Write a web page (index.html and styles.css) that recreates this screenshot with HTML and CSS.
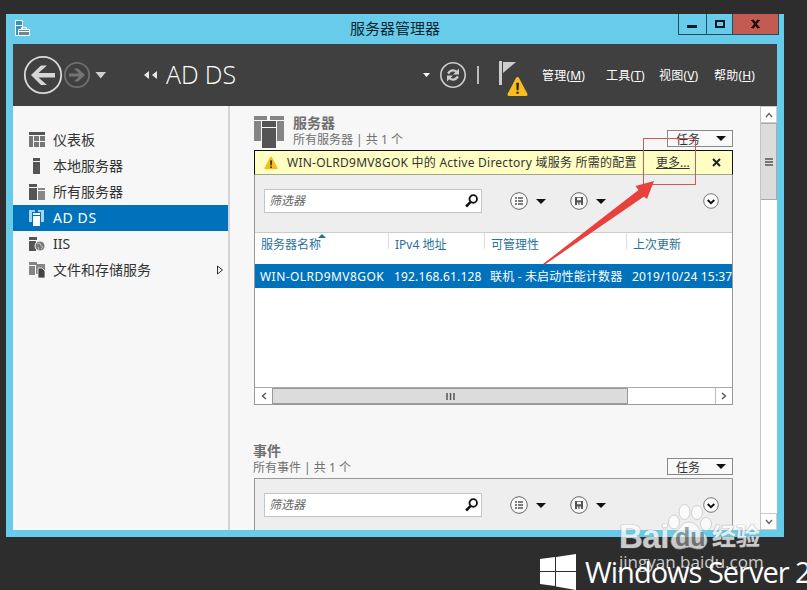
FILE: index.html
```
<!DOCTYPE html>
<html lang="zh-CN">
<head>
    <meta charset="UTF-8">
    <title>服务器管理器</title>
    <link rel="stylesheet" href="styles.css">
</head>
<body>
<!-- shared icons -->
<svg class="defs" width="0" height="0">
    <symbol id="warn" viewBox="0 0 20 20">
        <path d="M10 1 Q11 1 11.6 2.2 L19.4 17 Q20 19 18 19 H2 Q0 19 .6 17 L8.4 2.2 Q9 1 10 1Z" fill="#f5bd22"/>
        <path d="M8.8 6.5h2.6l-.4 7H9.2zM9 15h2.2v2H9z" fill="#2d230b"/>
    </symbol>
    <symbol id="search" viewBox="0 0 12 13">
        <circle cx="7.6" cy="4.6" r="3.5" fill="none" stroke="#111" stroke-width="1.7"/>
        <path d="M5 7.5L1 11.6" stroke="#111" stroke-width="2.4"/>
    </symbol>
    <symbol id="list" viewBox="0 0 18 18">
        <circle cx="9" cy="9" r="8.3" fill="#fafafa" stroke="#666" stroke-width="1"/>
        <path d="M5 6h2M5 9h2M5 12h2M8 6h5M8 9h5M8 12h5" stroke="#555" stroke-width="1.5"/>
    </symbol>
    <symbol id="save" viewBox="0 0 18 18">
        <circle cx="9" cy="9" r="8.3" fill="#fafafa" stroke="#666" stroke-width="1"/>
        <path d="M5 5h8v8H5z" fill="#555"/>
        <path d="M7 5.7h4v2.6H7zM7 10.5h1.3V13H7zM9.5 10.5H11V13H9.5z" fill="#fafafa"/>
    </symbol>
    <symbol id="expand" viewBox="0 0 16 16">
        <circle cx="8" cy="8" r="7.3" fill="#fcfcfc" stroke="#777" stroke-width="1"/>
        <path d="M4.7 7L8 10.2L11.3 7" fill="none" stroke="#111" stroke-width="2"/>
    </symbol>
</svg>

<div class="window">
    <div class="titlebar">
        <svg class="app-icon" width="17" height="17" viewBox="0 0 17 17">
            <path d="M1.500 .5h7v15h-7z" fill="#3493bd" stroke="#fff"/>
            <path d="M1 5.500h8" stroke="#fff"/>
            <path d="M4.500 9.500h11v6h-11z" fill="#6d8790" stroke="#fff"/>
            <path d="M7.500 9V7.500h5V9M5 11.500h11" fill="none" stroke="#fff"/>
        </svg>
        <span class="title">服务器管理器</span>
        <div class="controls">
            <span class="min"><svg width="27" height="20"><path d="M8 12.500h10" stroke="#081a26" stroke-width="3"/></svg></span>
            <span class="max"><svg width="25" height="20"><path d="M9 7h8v6H9z" fill="none" stroke="#081a26" stroke-width="2"/></svg></span>
            <span class="close"><svg width="45" height="20"><path d="M19.500 6l6 8M25.500 6l-6 8" stroke="#1c0808" stroke-width="2.200"/><path d="M18 6.500h3M24 6.500h3M18 13.500h3M24 13.500h3" stroke="#1c0808"/></svg></span>
        </div>
    </div>

    <div class="toolbar">
        <svg class="nav" width="96" height="40" viewBox="0 0 96 40">
            <circle cx="20" cy="20" r="18.2" fill="none" stroke="#dadada" stroke-width="1.8"/>
            <path d="M8 20L18 10.500h6L15.500 18H32v4.500H15.500L24 30h-6z" fill="#d6d6d6"/>
            <circle cx="54" cy="20" r="12.2" fill="none" stroke="#6e6e6e" stroke-width="1.8"/>
            <path d="M62 20L55 13.500h-4L56 18.400H46v3h10L51 26.500h4z" fill="#747474"/>
            <path d="M72.500 17h10.500l-5.250 6.500z" fill="#cfcfcf"/>
        </svg>
        <svg class="crumb" width="14" height="8" viewBox="0 0 14 8"><path d="M5 0v8L0 4zM13 0v8L8 4z" fill="#e8e8e8"/></svg>
        <span class="page">AD DS</span>
        <svg class="status" width="114" height="44" viewBox="0 0 114 44">
            <path d="M4 18h7l-3.500 4z" fill="#fff"/>
            <circle cx="34" cy="20" r="12.2" fill="none" stroke="#ccc" stroke-width="1.600"/>
            <path d="M29 18.500Q33 13 38 17M39 21.500Q35 27 30 23" fill="none" stroke="#ccc" stroke-width="2.200"/>
            <path d="M40 13.500v6h-6zM28 26.500v-6h6z" fill="#ccc"/>
            <path d="M59 11v18" stroke="#bbb" stroke-width="2"/>
            <path d="M80 6h3v24h-3z" fill="#ccc"/>
            <path d="M84 7h13L84 18z" fill="#ccc"/>
            <use href="#warn" x="88" y="21" width="21" height="21"/>
        </svg>
        <ul class="menu">
            <li>管理(<u>M</u>)</li>
            <li>工具(<u>T</u>)</li>
            <li>视图(<u>V</u>)</li>
            <li>帮助(<u>H</u>)</li>
        </ul>
    </div>

    <div class="main">
        <ul class="sidebar">
            <li>
                <svg width="16" height="16"><path d="M0 4h4v11H0zM5 4h5v5H5zM11 4h5v5h-5zM5 10h5v5H5zM11 10h5v5h-5z" fill="#777"/><path d="M0 0h16v3H0z" fill="#555"/></svg>
                <span>仪表板</span>
            </li>
            <li>
                <svg width="16" height="16"><path d="M4 0h7v3H4zM4 4h7v12H4z" fill="#555"/></svg>
                <span>本地服务器</span>
            </li>
            <li>
                <svg width="16" height="16"><path d="M0 0h8v3H0zM0 4h8v12H0z" fill="#555"/><path d="M9 4h7v2H9zM9 7h7v9H9z" fill="#888"/></svg>
                <span>所有服务器</span>
            </li>
            <li class="active">
                <svg width="16" height="16"><path d="M0 0h6v2H3v10H0zM9 0h6v12h-3V2H9z" fill="#a8d4ef"/><path d="M4 3h7v2H4zM4 6h7v10H4z" fill="#fff"/></svg>
                <span>AD DS</span>
            </li>
            <li>
                <svg width="16" height="16"><path d="M0 1h8v3H0zM0 5h7v10H0z" fill="#555"/><circle cx="11" cy="10" r="5" fill="#777" stroke="#f7f7f7"/><path d="M8 8l3-1 1 3 2 1-2 2M9 11l1 3" fill="none" stroke="#bbb"/></svg>
                <span>IIS</span>
            </li>
            <li>
                <svg width="16" height="16"><path d="M0 0h8v3H0zM0 4h6v9H0zM7 2h9v10H7z" fill="#858585"/><path d="M9 6h4l3 3v7H9z" fill="#444" stroke="#f7f7f7" stroke-width=".8"/></svg>
                <span>文件和存储服务</span>
                <svg class="more" width="8" height="10"><path d="M1.500 1L6.500 5L1.500 9z" fill="none" stroke="#333"/></svg>
            </li>
        </ul>

        <div class="content">
            <div class="tile servers">
                <div class="tile-head">
                    <svg width="30" height="32"><path d="M0 0h13v4H0zM0 5h7v20H0zM16 0h14v4H16zM23 5h7v20h-7z" fill="#858585"/><path d="M8 5h14v6H8zM8 12h14v20H8z" fill="#555"/></svg>
                    <div class="heading">
                        <h2>服务器</h2>
                        <p>所有服务器 | 共 1 个</p>
                    </div>
                    <button class="tasks">任务<i></i></button>
                </div>
                <div class="panel">
                    <div class="notice">
                        <svg width="14" height="14"><use href="#warn"/></svg>
                        <span class="message">WIN-OLRD9MV8GOK 中的 Active Directory 域服务 所需的配置</span>
                        <a class="link">更多...</a>
                        <svg class="dismiss" width="9" height="9"><path d="M1 1l7 7M8 1L1 8" stroke="#222" stroke-width="2"/></svg>
                    </div>
                    <div class="filter">
                        <div class="input"><em>筛选器</em><svg width="13" height="14"><use href="#search"/></svg></div>
                        <svg class="round" width="18" height="18"><use href="#list"/></svg><i></i>
                        <svg class="round" width="18" height="18"><use href="#save"/></svg><i></i>
                        <svg class="expand" width="16" height="16"><use href="#expand"/></svg>
                    </div>
                    <div class="row header">
                        <span class="sorted">服务器名称</span><span>IPv4 地址</span><span>可管理性</span><span>上次更新</span>
                    </div>
                    <div class="row selected">
                        <span class="name">WIN-OLRD9MV8GOK</span><span>192.168.61.128</span><span>联机 - 未启动性能计数器</span><span>2019/10/24 15:37</span>
                    </div>
                    <div class="blank"></div>
                    <div class="hscroll">
                        <b><svg width="6" height="8"><path d="M5 1L1.500 4L5 7" fill="none" stroke="#555" stroke-width="1.400"/></svg></b>
                        <div class="hthumb"><svg width="9" height="7"><path d="M1 0v7M4.500 0v7M8 0v7" stroke="#555" stroke-width="1.500"/></svg></div>
                        <b class="right"><svg width="6" height="8"><path d="M1 1L4.500 4L1 7" fill="none" stroke="#555" stroke-width="1.400"/></svg></b>
                    </div>
                </div>
            </div>

            <div class="tile events">
                <div class="tile-head">
                    <div class="heading">
                        <h2>事件</h2>
                        <p>所有事件 | 共 1 个</p>
                    </div>
                    <button class="tasks">任务<i></i></button>
                </div>
                <div class="panel">
                    <div class="filter">
                        <div class="input"><em>筛选器</em><svg width="13" height="14"><use href="#search"/></svg></div>
                        <svg class="round" width="18" height="18"><use href="#list"/></svg><i></i>
                        <svg class="round" width="18" height="18"><use href="#save"/></svg><i></i>
                        <svg class="expand" width="16" height="16"><use href="#expand"/></svg>
                    </div>
                </div>
            </div>
        </div>

        <div class="vscroll">
            <b><svg width="8" height="6"><path d="M1 5L4 1.500L7 5" fill="none" stroke="#666" stroke-width="1.400"/></svg></b>
            <div class="vthumb"><svg width="8" height="8"><path d="M0 1h8M0 4h8M0 7h8" stroke="#555" stroke-width="1.500"/></svg></div>
            <b class="down"><svg width="8" height="6"><path d="M1 1L4 4.500L7 1" fill="none" stroke="#666" stroke-width="1.400"/></svg></b>
        </div>
    </div>
</div>

<!-- desktop branding -->
<div class="brand">
    <svg width="36" height="36"><path d="M0 5l15-2v14H0zM16 3l20-3v17H16zM0 18h15v14L0 30zM16 18h20v18l-20-3.500z" fill="#fff"/></svg>
    <span>Windows Server 2</span>
</div>

<!-- annotation -->
<div class="mark"></div>
<svg class="arrow" width="112" height="84" viewBox="0 0 112 84"><path d="M0 83L95.500 9L92.500 5L111 0L104 18L101 15.500L2 83.500z" fill="#e8413c"/></svg>

<div class="watermark">
    <svg class="paw" width="46" height="46">
        <g fill="#fff" stroke="#bbb" stroke-width=".8"><ellipse cx="6" cy="18" rx="5.500" ry="7"/><ellipse cx="16.500" cy="8" rx="5.500" ry="7.500"/><ellipse cx="29" cy="8.500" rx="5.500" ry="7"/><ellipse cx="38" cy="20" rx="5.500" ry="6.500"/>
        <path d="M21 18Q27 18 31 25Q40 31 39 38Q37 46 29 45L21 43L13 45Q5 46 3 38Q3 31 11 25Q15 18 21 18z"/></g>
    </svg>
    <div class="logo"><span class="bai">Bai</span><span class="du">du</span><span class="jy">经验</span></div>
    <div class="url">jingyan.baidu.com</div>
</div>
</body>
</html>
```
FILE: styles.css
```
* {
    box-sizing: border-box;
}
body {
    margin: 0;
    width: 807px;
    height: 590px;
    position: relative;
    overflow: hidden;
    background: #2d2d2d;
    color: #333;
    font: 12px/16px "Noto Sans", "Noto Sans CJK SC", sans-serif;
    padding: 14px 0 0 6px;
}
svg {
    display: block;
    flex: none;
}
.defs {
    position: absolute;
}
ul {
    list-style: none;
    margin: 0;
    padding: 0;
}
span, a, em {
    white-space: nowrap;
}

/* window frame */
.window {
    width: 778px;
    height: 523px;
    padding: 0 7px 7px;
    background: #67cbe9;
    display: flex;
    flex-direction: column;
}
.titlebar {
    height: 30px;
    display: flex;
    align-items: flex-start;
    flex: none;
}
.app-icon {
    margin: 6px 0 0 1px;
}
.title {
    margin: 5px 0 0 319px;
    width: 100px;
    color: #092733;
    font-size: 15px;
    line-height: 19px;
}
.controls {
    display: flex;
    margin-left: auto;
    margin-right: -2px;
    border: 1px solid #1b505f;
    border-top: 0;
}
.controls span + span {
    border-left: 1px solid #1b505f;
}
.close {
    background: #c35b50;
}

/* dark toolbar */
.toolbar {
    height: 62px;
    flex: none;
    display: flex;
    align-items: center;
    background: #404040;
    color: #fff;
}
.nav {
    margin-left: 10px;
}
.crumb {
    margin-left: 25px;
}
.page {
    margin-left: 8px;
    width: 90px;
    font: 300 25px/30px "Open Sans", sans-serif;
    padding-bottom: 2px;
    letter-spacing: -.1px;
}
.status {
    margin-left: 163px;
    margin-top: 4px;
}
.menu {
    display: flex;
    margin: 2px 0 0 9px;
}
.menu li {
    width: 64px;
    white-space: nowrap;
    letter-spacing: .2px;
}
.menu li:nth-child(2) {
    width: 53px;
}
.menu li:nth-child(3) {
    width: 55px;
}
.menu li:nth-child(4) {
    width: 45px;
}

.main {
    flex: 1;
    min-height: 0;
    display: flex;
    background: #f7f7f7;
}

/* navigation */
.sidebar {
    width: 217px;
    flex: none;
    padding-top: 21px;
    border-right: 2px solid #d4d4d4;
    font-size: 14px;
}
.sidebar li {
    height: 26px;
    display: flex;
    align-items: center;
    padding-left: 16px;
}
.sidebar span {
    margin-left: 8px;
}
.sidebar .active {
    background: #0072bc;
    color: #fff;
    letter-spacing: .6px;
}
.more {
    margin-left: auto;
    margin-right: 4px;
}

/* tiles */
.content {
    width: 530px;
    flex: none;
    padding-left: 24px;
    overflow: hidden;
}
.tile {
    width: 479px;
}
.tile-head {
    display: flex;
    height: 44px;
    padding-top: 10px;
}
.heading {
    margin: -1px 0 0 9px;
    color: #707070;
}
h2 {
    margin: 0;
    font-size: 14px;
    line-height: 16px;
}
p {
    margin: 0;
    line-height: 18px;
}
.tasks {
    width: 66px;
    height: 17px;
    margin: 14px 0 0 auto;
    padding: 0 6px 0 8px;
    display: flex;
    align-items: center;
    justify-content: space-between;
    background: #f9f9f9;
    border: 1px solid #888;
    color: #333;
    font: 12px/14px "Noto Sans CJK SC", sans-serif;
}
i {
    border: 5px solid transparent;
    border-top-color: #111;
    border-bottom: 0;
}
.panel {
    border: 1px solid #999;
    background: #fff;
}
.servers .panel {
    height: 255px;
    border-top: 0;
}
.notice {
    display: flex;
    align-items: center;
    height: 25px;
    margin: 0 -1px;
    padding-left: 9px;
    background: #ffffc4;
    border: 1px solid #111;
    border-bottom-color: #a5a58b;
}
.message {
    margin-left: 9px;
    width: 369px;
    letter-spacing: .25px;
}
.link {
    text-decoration: underline;
}
.dismiss {
    margin-left: auto;
    margin-right: 11px;
}
.filter {
    height: 57px;
    display: flex;
    align-items: center;
    padding: 0 13px 5px 9px;
    background: #eee;
}
.input {
    width: 218px;
    height: 24px;
    margin-right: 28px;
    padding: 0 3px 0 4px;
    display: flex;
    justify-content: space-between;
    align-items: center;
    border: 1px solid #c4c4c4;
    background: #fff;
    color: #666;
}
.filter i {
    margin: 0 24px 0 8px;
}
.round + i + .expand {
    margin-left: auto;
}
.filter i:nth-last-of-type(1) {
    margin-right: 0;
}

.row {
    display: grid;
    grid-template-columns: 134px 96px 142px 105px;
    overflow: hidden;
}
.header {
    height: 32px;
    border-top: 1px solid #ccc;
    color: #2a709c;
}
.header span {
    height: 16px;
    padding: 4px 0 0 6px;
    border-right: 1px solid #ddd;
}
.header span:last-child {
    border: 0;
}
.header .sorted {
    position: relative;
}
.sorted::after {
    content: "";
    position: absolute;
    left: 63px;
    top: 1px;
    border: 4px solid transparent;
    border-bottom-color: #23719b;
    border-top: 0;
}
.selected {
    height: 24px;
    background: #0072bc;
    color: #fff;
    line-height: 25px;
    letter-spacing: .17px;
}
.selected span {
    padding-left: 5px;
}
.selected .name {
    letter-spacing: .45px;
}
.blank {
    height: 99px;
}
.hscroll {
    height: 17px;
    display: flex;
    border-top: 1px solid #aaa;
}
.hscroll b {
    width: 17px;
    display: flex;
    align-items: center;
    justify-content: center;
}
.hthumb {
    width: 356px;
    display: flex;
    align-items: center;
    justify-content: center;
    background: #dcdcdc;
    border: 1px solid #999;
}
.hscroll .right {
    margin-left: auto;
    border-left: 1px solid #bbb;
}

.events {
    margin-top: 39px;
}
.events .tile-head {
    height: 34px;
    padding-top: 0;
}
.events .heading {
    margin: -1px 0 0 -1px;
}
.events .filter {
    height: 56px;
    padding-bottom: 4px;
}

.vscroll {
    width: 17px;
    display: flex;
    flex-direction: column;
    border-left: 1px solid #c4c4c4;
    background: #fff;
}
.vscroll b {
    height: 17px;
    display: flex;
    align-items: center;
    justify-content: center;
    border: 1px solid #ccc;
    border-left: 0;
}
.vthumb {
    height: 77px;
    display: flex;
    align-items: center;
    justify-content: center;
    border: 1px solid #aaa;
    border-left: 0;
    background: #dcdcdc;
}
.down {
    margin-top: auto;
}

/* overlays */
.brand {
    position: absolute;
    left: 540px;
    top: 554px;
    display: flex;
    color: #fff;
}
.brand span {
    margin-left: 9px;
    font: 29px/36px "Open Sans", sans-serif;
    letter-spacing: -1px;
}
.mark {
    position: absolute;
    left: 643px;
    top: 138px;
    width: 53px;
    height: 47px;
    border: 1px solid #d0575a;
}
.arrow {
    position: absolute;
    left: 543px;
    top: 181px;
}
.watermark {
    position: absolute;
    left: 619px;
    top: 504px;
    width: 150px;
    height: 72px;
    color: #fff;
    opacity: .75;
}
.paw {
    position: absolute;
    left: 49px;
    top: 0;
}
.logo {
    display: flex;
    padding-top: 17px;
    font: bold 33px/32px "Liberation Sans", "Noto Sans CJK SC", sans-serif;
    text-shadow: 0 0 1px #888, 0 0 1px #888;
}
.bai {
    width: 56px;
    letter-spacing: -.5px;
}
.du {
    position: relative;
    width: 37px;
    color: #888;
    font-size: 25px;
    text-shadow: none;
}
.jy {
    font-size: 24px;
}
.url {
    margin-top: -1px;
    font: 17px/20px "Open Sans", sans-serif;
}
```
